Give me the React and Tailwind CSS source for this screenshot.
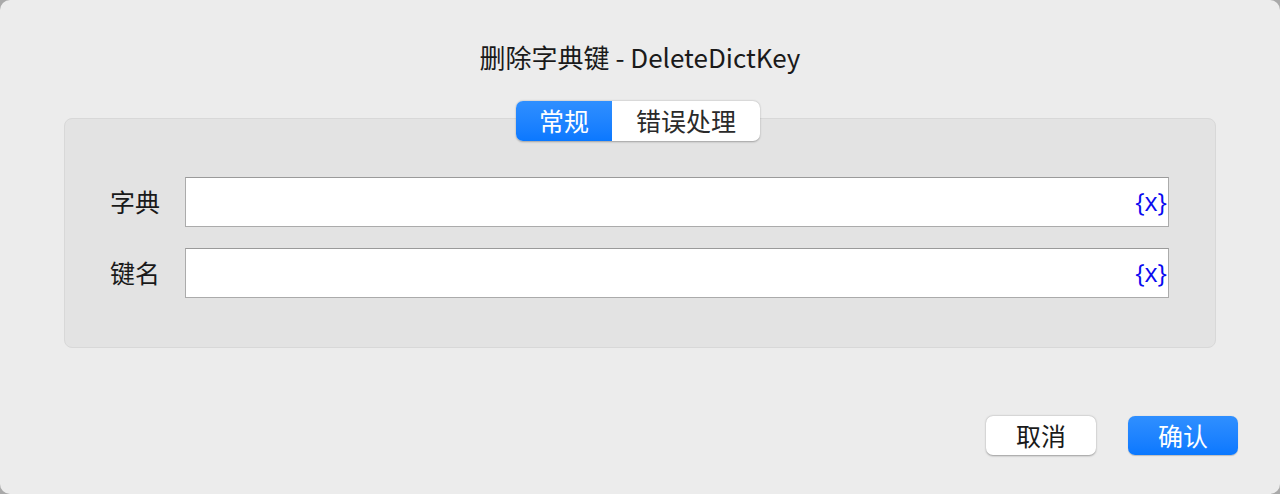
export default function App() {
  const font = { fontFamily: '"Noto Sans CJK SC", "Noto Sans", sans-serif' };
  const fields = ["字典", "键名"];

  return (
    <div className="h-[494px] w-[1280px] bg-[#a9a9a9]" style={font}>
      <div className="flex h-full w-full flex-col rounded-[10px] bg-[#ececec]">
        <div className="flex h-[118px] shrink-0 justify-center pt-[39px] text-[26px] leading-[36px] text-[#1a1a1a]">
          删除字典键 - DeleteDictKey
        </div>

        <div className="relative mx-[64px] h-[230px] shrink-0 rounded-[8px] border border-[#d8d8d8] bg-[#e3e3e3]">
          <div className="absolute left-[451px] top-[-18px] flex h-[40px] overflow-hidden rounded-[7px] bg-white text-[25px] shadow-[0_0.5px_2px_rgba(0,0,0,0.3)]">
            <div className="flex w-[96px] items-center justify-center bg-gradient-to-b from-[#2f8fff] to-[#0a78ff] text-white">
              常规
            </div>
            <div className="flex w-[148px] items-center justify-center text-[#2a2a2a]">
              错误处理
            </div>
          </div>

          <div className="flex flex-col gap-[21px] pl-[45px] pt-[58px]">
            {fields.map((f) => (
              <div key={f} className="flex items-center">
                <div className="w-[75px] text-[25px] text-[#1a1a1a]">{f}</div>
                <div className="flex h-[50px] w-[984px] items-center justify-end border border-[#ababab] border-t-[#9a9a9a] bg-white pr-[1px]">
                  <span className="text-[25px] font-medium text-[#0a0af0]" style={{ fontFamily: '"Open Sans", sans-serif' }}>
                    {"{x}"}
                  </span>
                </div>
              </div>
            ))}
          </div>
        </div>

        <div className="flex flex-1 items-start justify-end gap-[32px] pr-[42px] pt-[68px]">
          <button className="flex h-[39px] w-[110px] items-center justify-center rounded-[7px] bg-white text-[25px] text-[#1a1a1a] shadow-[0_0.5px_2px_rgba(0,0,0,0.35)]">
            取消
          </button>
          <button className="flex h-[39px] w-[110px] items-center justify-center rounded-[7px] bg-gradient-to-b from-[#2f8fff] to-[#0a78ff] text-[25px] text-white shadow-[0_0.5px_1px_rgba(0,0,0,0.2)]">
            确认
          </button>
        </div>
      </div>
    </div>
  );
}
